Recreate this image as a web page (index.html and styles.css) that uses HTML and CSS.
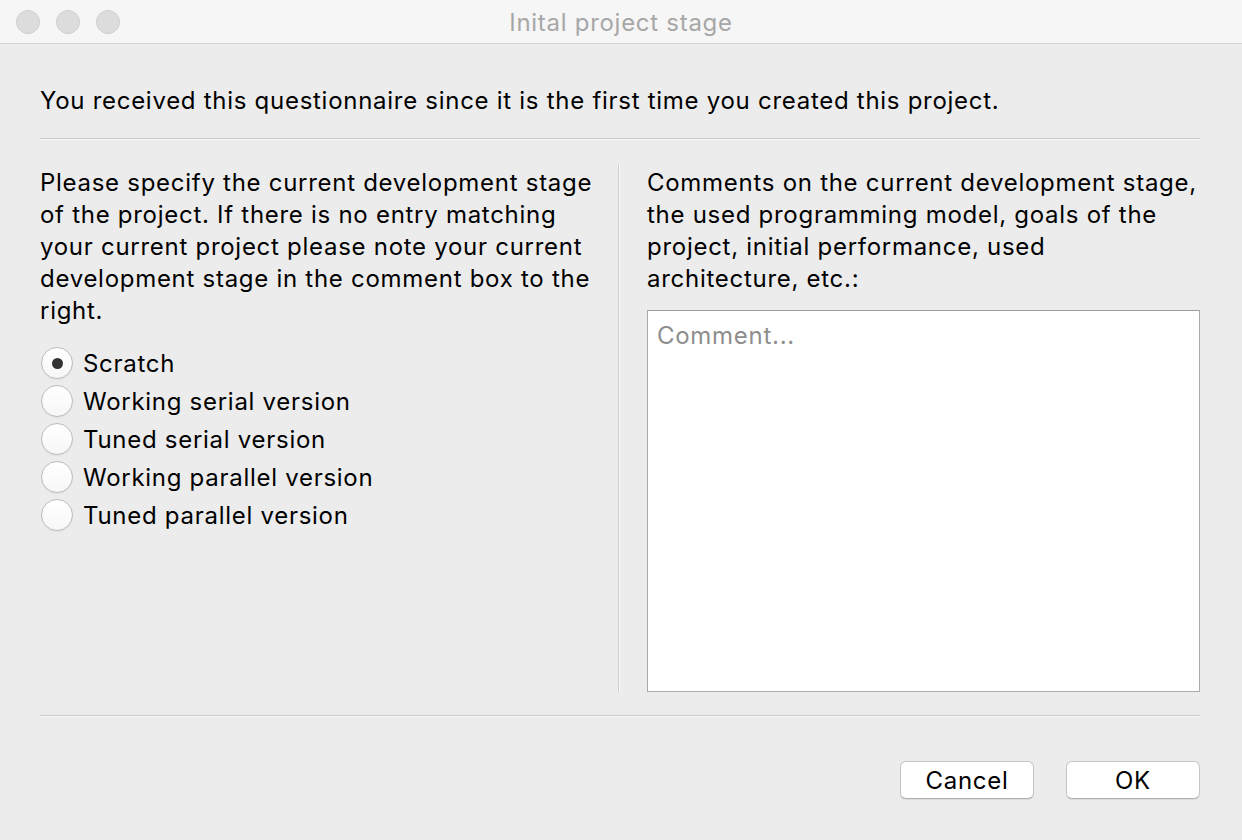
FILE: index.html
```html
<!DOCTYPE html>
<html>
<head>
<meta charset="utf-8">
<link rel="stylesheet" href="styles.css">
</head>
<body>
<div class="window">
  <div class="titlebar">
    <div class="lights">
      <span class="light"></span><span class="light"></span><span class="light"></span>
    </div>
    <div class="title">Inital project stage</div>
  </div>
  <div class="main">
    <p class="intro">You received this questionnaire since it is the first time you created this project.</p>
    <div class="sep"></div>
    <div class="columns">
      <div class="left">
        <p class="para">Please specify the current development stage of the project. If there is no entry matching your current project please note your current development stage in the comment box to the right.</p>
        <div class="radios">
          <label class="radio"><span class="dot checked"></span><span>Scratch</span></label>
          <label class="radio"><span class="dot"></span><span>Working serial version</span></label>
          <label class="radio"><span class="dot"></span><span>Tuned serial version</span></label>
          <label class="radio"><span class="dot"></span><span>Working parallel version</span></label>
          <label class="radio"><span class="dot"></span><span>Tuned parallel version</span></label>
        </div>
      </div>
      <div class="vdiv"></div>
      <div class="right">
        <p class="para">Comments on the current development stage, the used programming model, goals of the project, initial performance, used architecture, etc.:</p>
        <div class="textarea"><span class="placeholder">Comment...</span></div>
      </div>
    </div>
    <div class="sep sep2"></div>
    <div class="buttons">
      <button class="btn">Cancel</button>
      <button class="btn">OK</button>
    </div>
  </div>
</div>
</body>
</html>
```

FILE: styles.css
```css
* { box-sizing: border-box; }
html, body { margin: 0; padding: 0; }
body {
  background: #ececec;
  font-family: "Inter", "Liberation Sans", sans-serif;
  font-size: 24px;
  letter-spacing: 0.72px;
  color: #000;
  width: 1242px;
  height: 840px;
  overflow: hidden;
}
.titlebar {
  height: 44px;
  background: #f6f6f6;
  border-bottom: 1px solid #d1d1d1;
  display: grid;
  align-items: center;
}
.lights, .title { grid-area: 1 / 1; }
.lights {
  display: flex;
  gap: 16px;
  padding-left: 16px;
}
.light {
  width: 24px;
  height: 24px;
  border-radius: 50%;
  background: #dcdcdc;
  border: 1px solid #cfcfcf;
}
.title {
  text-align: center;
  color: #a7a7a7;
  font-size: 24px;
  padding-top: 2px;
}
.main {
  padding: 0 42px 0 40px;
}
p { margin: 0; }
.intro {
  padding-top: 41px;
  line-height: 32px;
}
.sep {
  margin-top: 21px;
  height: 2px;
  border-top: 1px solid #c9c9c9;
  border-bottom: 1px solid #f8f8f8;
}
.columns {
  margin-top: 25px;
  height: 527px;
  display: flex;
}
.left { width: 556px; padding-top: 2px; flex: none; }
.vdiv {
  flex: none;
  margin: 0 27px 0 22px;
  width: 2px;
  border-left: 1px solid #cbcbcb;
  border-right: 1px solid #f8f8f8;
}
.right {
  flex: 1;
  padding-top: 2px;
  display: flex;
  flex-direction: column;
}
.para { line-height: 32px; }
.radios {
  margin-top: 17px;
  display: flex;
  flex-direction: column;
}
.radio {
  height: 38px;
  display: flex;
  align-items: center;
  gap: 10px;
  padding-left: 1px;
}
.dot {
  width: 32px;
  height: 32px;
  border-radius: 50%;
  border: 1px solid #bcbcbc;
  background: linear-gradient(#ffffff, #f7f7f7);
  box-shadow: 0 1px 1px rgba(0,0,0,0.06);
  display: flex;
  align-items: center;
  justify-content: center;
}
.dot.checked::after {
  content: "";
  width: 11px;
  height: 11px;
  border-radius: 50%;
  background: #333;
}
.textarea {
  margin-top: 15px;
  flex: 1;
  background: #fff;
  border: 1px solid #a9a9a9;
  border-top-color: #9c9c9c;
  padding: 9px 9px;
  line-height: 32px;
}
.placeholder { color: #8e8e8e; }
.sep2 { margin-top: 23px; }
.buttons {
  margin-top: 44px;
  display: flex;
  justify-content: flex-end;
  gap: 32px;
}
.btn {
  width: 134px;
  height: 38px;
  font-family: inherit;
  font-size: 24px;
  letter-spacing: inherit;
  color: #000;
  background: #fff;
  border: 1px solid #c6c6c6;
  border-bottom-color: #b0b0b0;
  border-radius: 6px;
  box-shadow: 0 1px 1px rgba(0,0,0,0.08);
  padding: 0;
}
```
